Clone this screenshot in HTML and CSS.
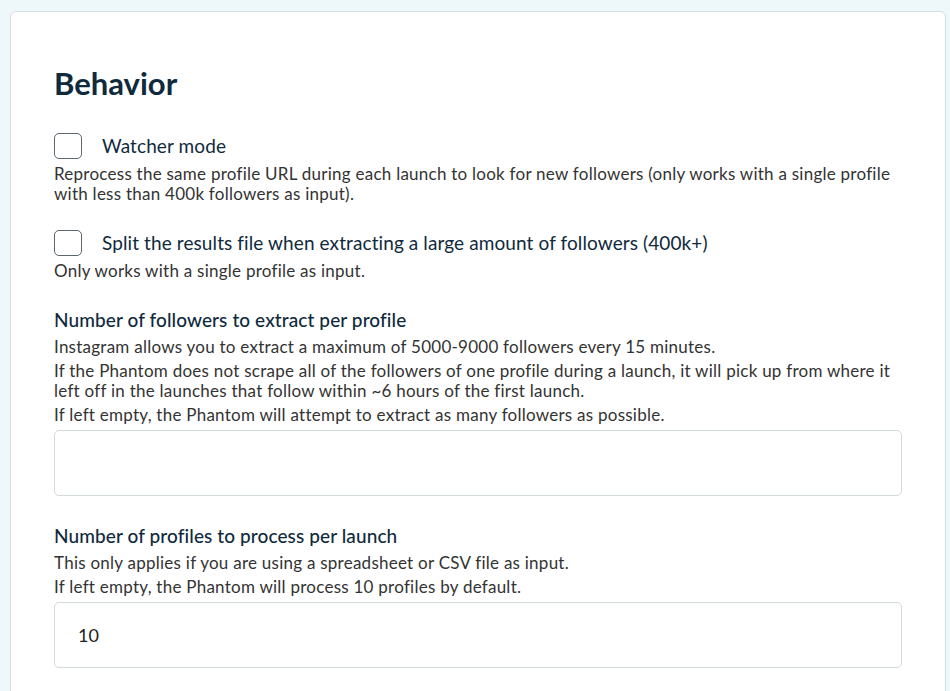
FILE: index.html
```html
<!DOCTYPE html>
<html lang="en">

<head>
    <meta charset="UTF-8">
    <meta name="viewport" content="width=device-width, initial-scale=1.0">
    <title>Behavior</title>
    <link rel="stylesheet" href="styles.css">
</head>

<body>
    <div class="card">
        <h2 class="card-title">Behavior</h2>

        <div class="field">
            <label class="check-row">
                <input type="checkbox" class="check">
                <span class="check-label">Watcher mode</span>
            </label>
            <p class="hint">Reprocess the same profile URL during each launch to look for new followers (only works with a single profile with less than 400k followers as input).</p>
        </div>

        <div class="field field-tight">
            <label class="check-row">
                <input type="checkbox" class="check">
                <span class="check-label">Split the results file when extracting a large amount of followers (400k+)</span>
            </label>
            <p class="hint">Only works with a single profile as input.</p>
        </div>

        <div class="field">
            <label class="field-label" for="followers">Number of followers to extract per profile</label>
            <div class="hints">
                <p class="hint">Instagram allows you to extract a maximum of 5000-9000 followers every 15 minutes.</p>
                <p class="hint">If the Phantom does not scrape all of the followers of one profile during a launch, it will pick up from where it left off in the launches that follow within ~6 hours of the first launch.</p>
                <p class="hint">If left empty, the Phantom will attempt to extract as many followers as possible.</p>
            </div>
            <input type="text" id="followers" class="text-input">
        </div>

        <div class="field">
            <label class="field-label" for="profiles">Number of profiles to process per launch</label>
            <div class="hints">
                <p class="hint">This only applies if you are using a spreadsheet or CSV file as input.</p>
                <p class="hint">If left empty, the Phantom will process 10 profiles by default.</p>
            </div>
            <input type="text" id="profiles" class="text-input" value="10">
        </div>
    </div>
</body>

</html>
```

FILE: styles.css
```css
* {
    margin: 0;
    padding: 0;
    box-sizing: border-box;
}

body {
    font-family: 'Lato', 'Liberation Sans', sans-serif;
    background-color: #eef7f9;
    color: #333;
    height: 100vh;
    overflow: hidden;
}

.card {
    margin: 11px 4px 0 10px;
    min-height: 720px;
    background-color: #fff;
    border: 1px solid #d5dfe2;
    border-radius: 6px;
    padding: 51px 43px 0 43px;
}

.card-title {
    font-size: 31px;
    font-weight: 700;
    color: #0f2a3d;
    line-height: 40px;
    margin-bottom: 30px;
}

.field {
    margin-bottom: 27px;
}

.field-tight {
    margin-bottom: 26px;
}

.check-row {
    display: flex;
    align-items: center;
    gap: 20px;
    cursor: pointer;
}

.check {
    appearance: none;
    width: 28px;
    height: 26px;
    border: 1.5px solid #5b6670;
    border-radius: 5px;
    background-color: #fff;
    flex-shrink: 0;
}

.check-label {
    font-size: 19px;
    letter-spacing: 0.1px;
    color: #0f2a3d;
    line-height: 26px;
}

.hint {
    font-size: 17px;
    letter-spacing: 0.25px;
    line-height: 20px;
    color: #333;
}

.check-row + .hint {
    margin-top: 5px;
    line-height: 19.5px;
}

.field-label {
    display: block;
    font-size: 19px;
    font-weight: 500;
    letter-spacing: 0.1px;
    color: #0f2a3d;
    line-height: 26px;
    margin-bottom: 4px;
}

.hints {
    display: flex;
    flex-direction: column;
    gap: 4px;
}

.text-input {
    display: block;
    width: 100%;
    height: 66px;
    margin-top: 5px;
    border: 1px solid #d3dadd;
    border-radius: 5px;
    padding: 0 23px;
    font-family: 'Lato', 'Liberation Sans', sans-serif;
    font-size: 18px;
    color: #222;
    outline: none;
}
```
